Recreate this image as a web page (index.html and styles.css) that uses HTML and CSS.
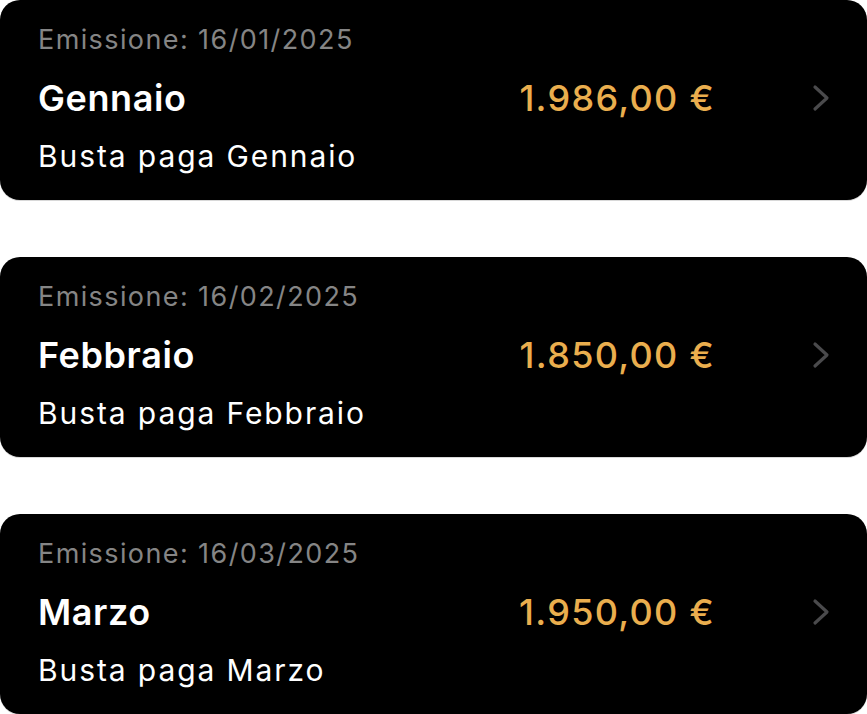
FILE: index.html
```html
<!DOCTYPE html>
<html lang="it">
<head>
    <meta charset="UTF-8">
    <meta name="viewport" content="width=device-width, initial-scale=1.0">
    <title>Buste paga</title>
    <link rel="stylesheet" href="styles.css">
</head>
<body>
    <div class="list">
        <div class="card">
            <div class="card-date">Emissione: 16/01/2025</div>
            <div class="card-row">
                <div class="card-title">Gennaio</div>
                <div class="card-amount">1.986,00 €</div>
                <svg class="chevron" viewBox="0 0 18 28" width="18" height="28"><path d="M3 3 L15 14 L3 25"/></svg>
            </div>
            <div class="card-desc">Busta paga Gennaio</div>
        </div>

        <div class="card">
            <div class="card-date">Emissione: 16/02/2025</div>
            <div class="card-row">
                <div class="card-title">Febbraio</div>
                <div class="card-amount">1.850,00 €</div>
                <svg class="chevron" viewBox="0 0 18 28" width="18" height="28"><path d="M3 3 L15 14 L3 25"/></svg>
            </div>
            <div class="card-desc">Busta paga Febbraio</div>
        </div>

        <div class="card">
            <div class="card-date">Emissione: 16/03/2025</div>
            <div class="card-row">
                <div class="card-title">Marzo</div>
                <div class="card-amount">1.950,00 €</div>
                <svg class="chevron" viewBox="0 0 18 28" width="18" height="28"><path d="M3 3 L15 14 L3 25"/></svg>
            </div>
            <div class="card-desc">Busta paga Marzo</div>
        </div>
    </div>
</body>
</html>
```

FILE: styles.css
```css
:root {
    --card-bg: #000;
    --muted: #858585;
    --accent: #eaae4e;
    --chevron: #4a4a4c;
}

body {
    margin: 0;
    padding: 0;
    background: #fff;
    font-family: 'Inter', 'Noto Sans', sans-serif;
    color: #fff;
}

.list {
    display: flex;
    flex-direction: column;
    gap: 57px;
}

.card {
    background: var(--card-bg);
    border-radius: 20px;
    height: 200px;
    box-sizing: border-box;
    padding: 23px 37px 0 38px;
    box-shadow: 0 1px 0 #d8d8d8;
}

.card-date {
    color: var(--muted);
    font-size: 27px;
    line-height: 34px;
    letter-spacing: 1.4px;
}

.card-row {
    display: flex;
    align-items: center;
    margin-top: 19px;
    height: 44px;
    line-height: 44px;
}

.card-title {
    flex: 1;
    font-size: 36px;
    font-weight: 600;
    letter-spacing: 0.6px;
}

.card-amount {
    color: var(--accent);
    font-size: 36px;
    font-weight: 500;
    letter-spacing: 1.3px;
    margin-right: 97px;
}

.chevron {
    fill: none;
    stroke: var(--chevron);
    stroke-width: 3.2;
    stroke-linecap: round;
    stroke-linejoin: round;
}

.card-desc {
    font-size: 30px;
    line-height: 36px;
    letter-spacing: 1.9px;
    margin-top: 18px;
}
```
